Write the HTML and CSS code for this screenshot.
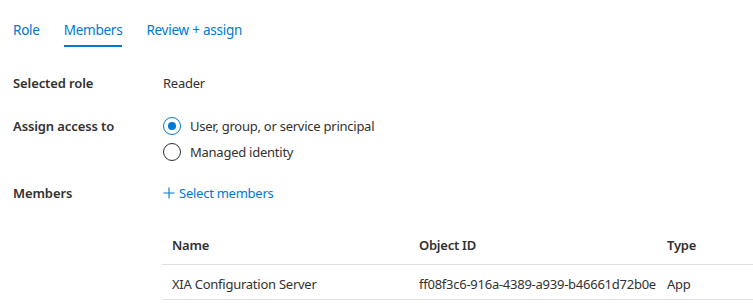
FILE: index.html
```html
<!DOCTYPE html>
<html lang="en">
<head>
    <meta charset="UTF-8">
    <title>Add role assignment</title>
    <link rel="stylesheet" href="styles.css">
</head>
<body>
    <nav class="tabs">
        <a class="tab" href="#">Role</a>
        <a class="tab active" href="#">Members</a>
        <a class="tab" href="#">Review + assign</a>
    </nav>

    <div class="form">
        <div class="row">
            <div class="label">Selected role</div>
            <div class="value">Reader</div>
        </div>

        <div class="row row-access">
            <div class="label">Assign access to</div>
            <div class="value radios">
                <label class="radio checked"><span class="dot"></span>User, group, or service principal</label>
                <label class="radio"><span class="dot"></span>Managed identity</label>
            </div>
        </div>

        <div class="row row-members">
            <div class="label">Members</div>
            <div class="value">
                <a class="add-link" href="#">
                    <svg width="12" height="12" viewBox="0 0 12 12"><path d="M6 0.5v11M0.5 6h11" stroke="#0078d4" stroke-width="1.1" fill="none"/></svg>
                    Select members
                </a>
            </div>
        </div>
    </div>

    <table class="members">
        <thead>
            <tr>
                <th class="col-name">Name</th>
                <th class="col-id">Object ID</th>
                <th>Type</th>
            </tr>
        </thead>
        <tbody>
            <tr>
                <td>XIA Configuration Server</td>
                <td>ff08f3c6-916a-4389-a939-b46661d72b0e</td>
                <td>App</td>
            </tr>
        </tbody>
    </table>
</body>
</html>
```

FILE: styles.css
```css
body {
    font-family: "Noto Sans", "Open Sans", sans-serif;
    font-size: 13px;
    letter-spacing: -0.25px;
    color: #323130;
    margin: 0;
    padding: 0;
    background: #fff;
}

a {
    text-decoration: none;
}

.tabs {
    display: flex;
    gap: 24px;
    padding: 20px 0 0 13px;
}

.tab {
    color: #0078d4;
    font-size: 13.5px;
    line-height: 20px;
    padding-bottom: 5px;
    border-bottom: 2px solid transparent;
}

.tab.active {
    border-bottom-color: #0078d4;
}

.form {
    padding: 26px 0 0 13px;
}

.row {
    display: flex;
    line-height: 20px;
}

.label {
    width: 150px;
    font-weight: 600;
    letter-spacing: -0.1px;
}

.row-access {
    margin-top: 23px;
}

.row-members {
    margin-top: 21px;
}

.radios {
    display: flex;
    flex-direction: column;
    gap: 6px;
}

.radio {
    display: flex;
    align-items: center;
    gap: 9px;
}

.dot {
    width: 18px;
    height: 18px;
    box-sizing: border-box;
    border: 1px solid #323130;
    border-radius: 50%;
    display: inline-block;
    position: relative;
}

.radio.checked .dot {
    border-color: #0078d4;
}

.radio.checked .dot::after {
    content: "";
    position: absolute;
    left: 4px;
    top: 4px;
    width: 8px;
    height: 8px;
    border-radius: 50%;
    background: #0078d4;
}

.add-link {
    color: #0078d4;
    display: inline-flex;
    align-items: center;
    gap: 4px;
}

.members {
    margin: 19px 0 0 162px;
    border-collapse: collapse;
    table-layout: fixed;
    width: calc(100% - 162px);
}

.members th,
.members td {
    text-align: left;
    line-height: 20px;
    border-bottom: 1px solid #e1dfdd;
    white-space: nowrap;
    overflow: hidden;
}

.members th {
    font-weight: 600;
    padding: 12px 10px 9px;
}

.members td {
    padding: 9px 10px 5px;
}

.col-name {
    width: 227px;
}

.col-id {
    width: 228px;
}
```
